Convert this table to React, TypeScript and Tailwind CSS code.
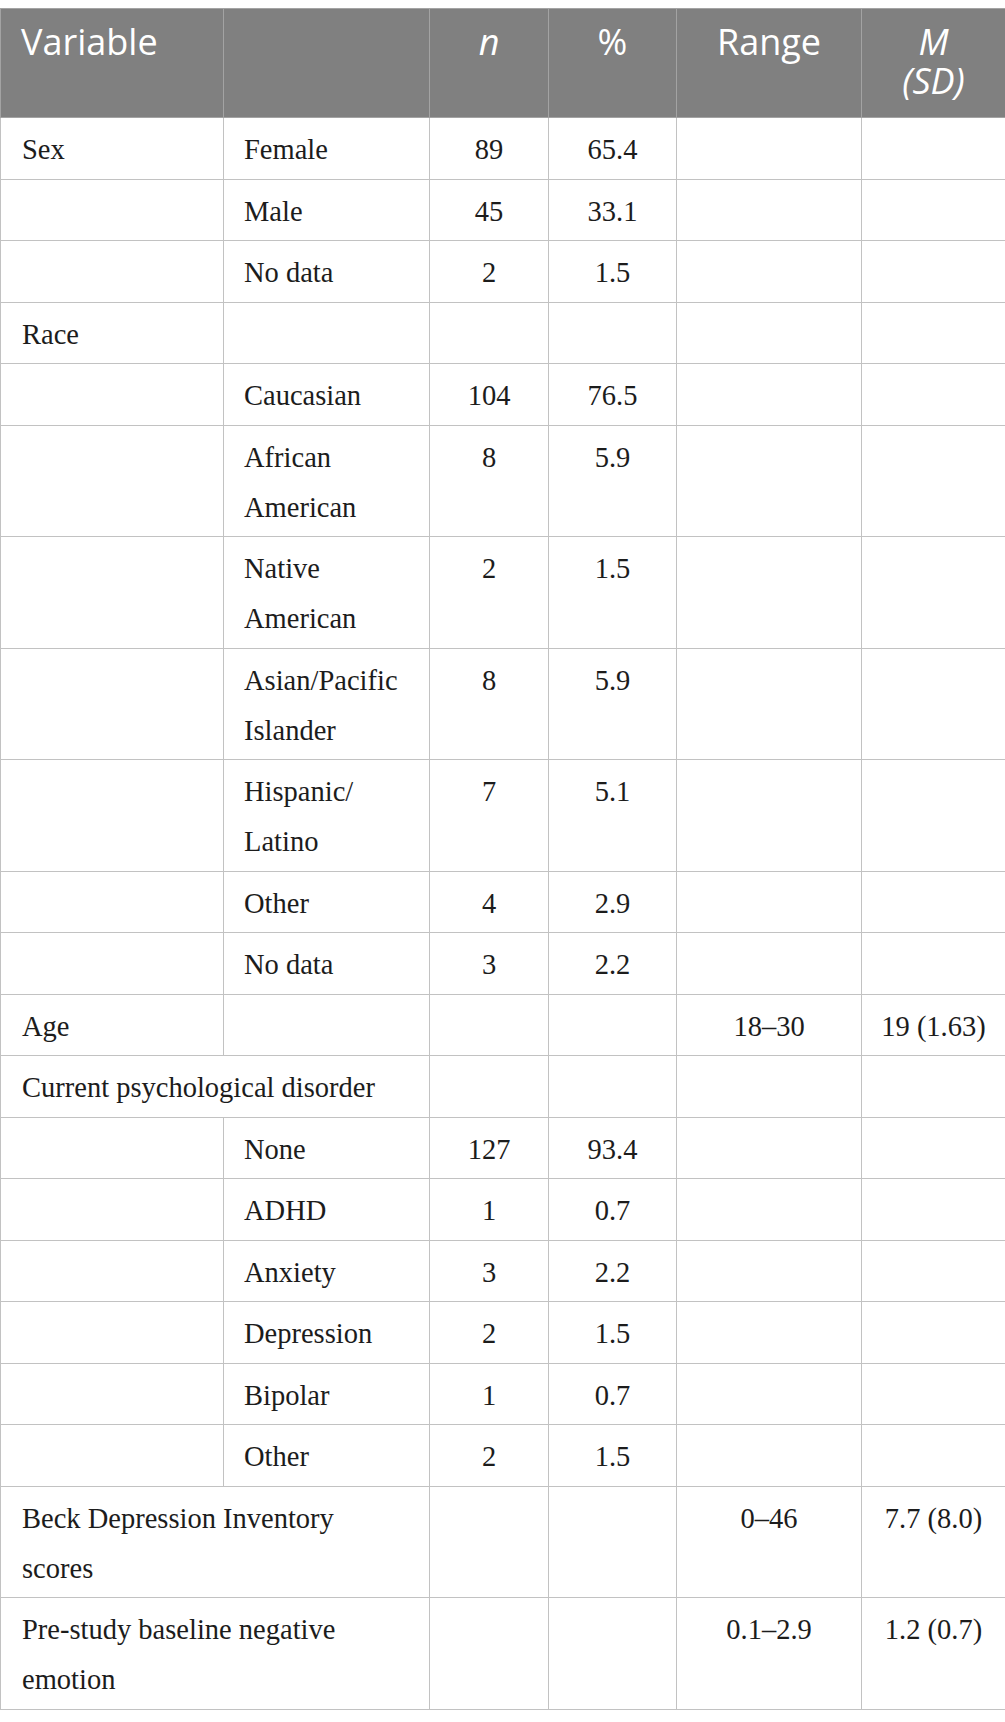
type Row = {
  label?: string
  sub?: React.ReactNode
  span?: boolean
  n?: string
  pct?: string
  range?: string
  msd?: string
}

const rows: Row[] = [
  { label: 'Sex', sub: 'Female', n: '89', pct: '65.4' },
  { sub: 'Male', n: '45', pct: '33.1' },
  { sub: 'No data', n: '2', pct: '1.5' },
  { label: 'Race' },
  { sub: 'Caucasian', n: '104', pct: '76.5' },
  { sub: 'African American', n: '8', pct: '5.9' },
  { sub: 'Native American', n: '2', pct: '1.5' },
  { sub: 'Asian/Pacific Islander', n: '8', pct: '5.9' },
  { sub: <>Hispanic/<wbr />Latino</>, n: '7', pct: '5.1' },
  { sub: 'Other', n: '4', pct: '2.9' },
  { sub: 'No data', n: '3', pct: '2.2' },
  { label: 'Age', range: '18–30', msd: '19 (1.63)' },
  { label: 'Current psychological disorder', span: true },
  { sub: 'None', n: '127', pct: '93.4' },
  { sub: 'ADHD', n: '1', pct: '0.7' },
  { sub: 'Anxiety', n: '3', pct: '2.2' },
  { sub: 'Depression', n: '2', pct: '1.5' },
  { sub: 'Bipolar', n: '1', pct: '0.7' },
  { sub: 'Other', n: '2', pct: '1.5' },
  { label: 'Beck Depression Inventory scores', span: true, range: '0–46', msd: '7.7 (8.0)' },
  { label: 'Pre-study baseline negative emotion', span: true, range: '0.1–2.9', msd: '1.2 (0.7)' },
]

const th = 'align-top border border-[#a3a3a3] pt-[14px] pb-[17px] px-[20px] leading-[38.5px] font-normal'
const td = 'align-top border border-[#c2c2c2] pt-[7px] pb-[3.5px] leading-[50px]'

export default function App() {
  return (
    <div className="bg-white min-h-[1722px] pt-[8px]">
      <table
        className="w-[1005px] table-fixed border-collapse text-[#1c1c1c] text-[28.5px]"
        style={{ fontFamily: '"Liberation Serif", "Times New Roman", serif' }}
      >
        <colgroup>
          <col className="w-[223px]" />
          <col className="w-[206px]" />
          <col className="w-[119px]" />
          <col className="w-[128px]" />
          <col className="w-[185px]" />
          <col className="w-[144px]" />
        </colgroup>
        <thead>
          <tr
            className="bg-[#808080] text-white text-[36px]"
            style={{ fontFamily: '"Open Sans", "Noto Sans", sans-serif' }}
          >
            <th className={`${th} text-left`}>Variable</th>
            <th className={th}></th>
            <th className={`${th} text-center italic`}>n</th>
            <th className={`${th} text-center`}>%</th>
            <th className={`${th} text-center`}>Range</th>
            <th className={`${th} text-center italic`}>
              M
              <br />
              (SD)
            </th>
          </tr>
        </thead>
        <tbody>
          {rows.map((r, i) => (
            <tr key={i}>
              {r.span ? (
                <td colSpan={2} className={`${td} pl-[21px] pr-[44px]`}>{r.label}</td>
              ) : (
                <>
                  <td className={`${td} pl-[21px] pr-[12px]`}>{r.label}</td>
                  <td className={`${td} pl-[20px] pr-[24px]`}>{r.sub}</td>
                </>
              )}
              {!r.span && (
                <>
                  <td className={`${td} text-center`}>{r.n}</td>
                  <td className={`${td} text-center`}>{r.pct}</td>
                </>
              )}
              {r.span && (
                <>
                  <td className={td}></td>
                  <td className={td}></td>
                </>
              )}
              <td className={`${td} text-center`}>{r.range}</td>
              <td className={`${td} text-center`}>{r.msd}</td>
            </tr>
          ))}
        </tbody>
      </table>
    </div>
  )
}
